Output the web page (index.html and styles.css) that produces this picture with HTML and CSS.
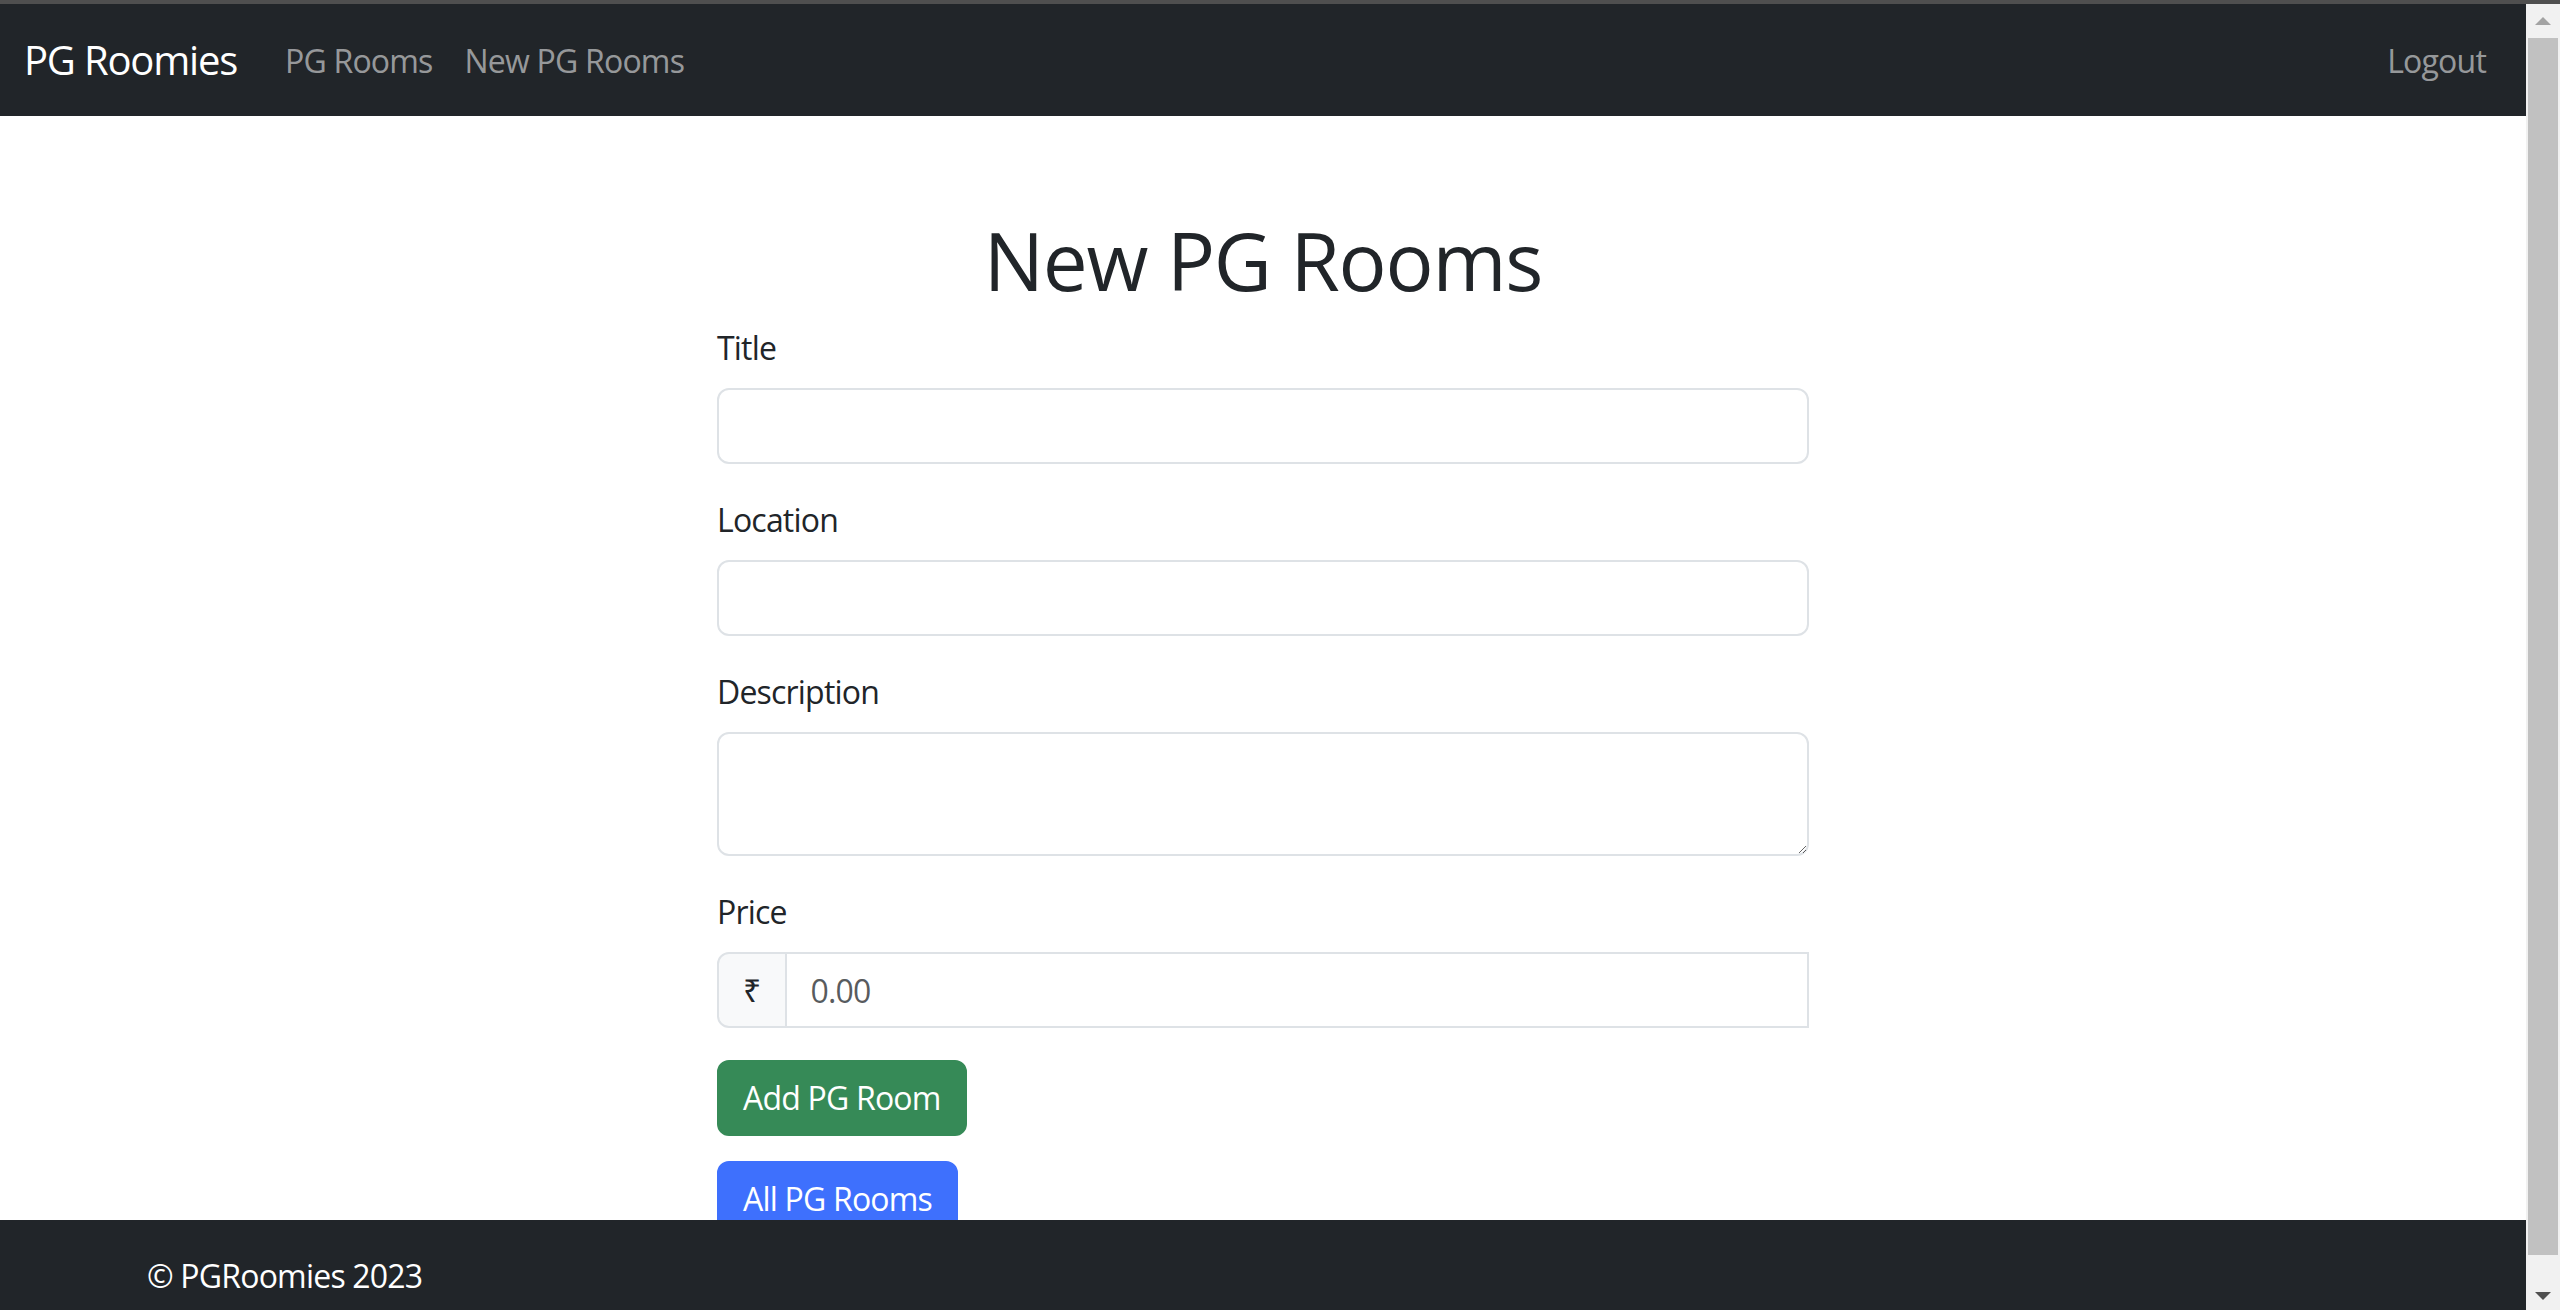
FILE: index.html
```html
<!DOCTYPE html>
<html lang="en">
<head>
<meta charset="utf-8">
<title>New PG Rooms</title>
<link rel="stylesheet" href="styles.css">
</head>
<body>
<div class="window-edge"></div>
<div class="viewport">
  <div class="app">
    <nav class="navbar">
      <a class="brand" href="#">PG Roomies</a>
      <ul class="nav">
        <li><a class="nav-link" href="#">PG Rooms</a></li>
        <li><a class="nav-link" href="#">New PG Rooms</a></li>
      </ul>
      <ul class="nav nav-right">
        <li><a class="nav-link" href="#">Logout</a></li>
      </ul>
    </nav>
    <main class="main">
      <div class="container">
        <div class="col">
          <h1 class="title">New PG Rooms</h1>
          <form class="form">
            <div class="field">
              <label class="form-label" for="title">Title</label>
              <input class="form-control" type="text" id="title">
            </div>
            <div class="field">
              <label class="form-label" for="location">Location</label>
              <input class="form-control" type="text" id="location">
            </div>
            <div class="field">
              <label class="form-label" for="description">Description</label>
              <textarea class="form-control textarea" id="description"></textarea>
            </div>
            <div class="field">
              <label class="form-label" for="price">Price</label>
              <div class="input-group">
                <span class="addon">₹</span>
                <input class="form-control group-input" type="text" id="price" placeholder="0.00">
              </div>
            </div>
            <button class="btn btn-success" type="button">Add PG Room</button>
          </form>
          <div class="back">
            <a class="btn btn-primary" href="#">All PG Rooms</a>
          </div>
        </div>
      </div>
    </main>
    <footer class="footer">
      <div class="container">
        <span>© PGRoomies 2023</span>
      </div>
    </footer>
  </div>
  <div class="scrollbar">
    <div class="sb-button"><span class="arrow-up"></span></div>
    <div class="sb-track"><div class="sb-thumb"></div></div>
    <div class="sb-button"><span class="arrow-down"></span></div>
  </div>
</div>
</body>
</html>
```

FILE: styles.css
```css
* {
  box-sizing: border-box;
}

html,
body {
  margin: 0;
  height: 100%;
  overflow: hidden;
}

body {
  font-family: "Open Sans", "Noto Sans", "DejaVu Sans", sans-serif;
  font-size: 32px;
  line-height: 1.5;
  letter-spacing: -0.025em;
  color: #212529;
  background: #ffffff;
}

.window-edge {
  height: 4px;
  background: #4f4f4f;
}

.viewport {
  display: flex;
  align-items: flex-start;
  height: 1306px;
  overflow: hidden;
}

.app {
  flex: 1;
  display: flex;
  flex-direction: column;
  height: 1328px;
  min-width: 0;
}

/* Navbar */
.navbar {
  display: flex;
  align-items: center;
  height: 112px;
  padding: 16px 24px;
  background: #212529;
  flex-shrink: 0;
}

.brand {
  font-size: 40px;
  line-height: 60px;
  color: #ffffff;
  text-decoration: none;
  margin-right: 32px;
  letter-spacing: -0.03em;
}

.nav {
  display: flex;
  list-style: none;
  margin: 0;
  padding: 0;
}

.nav-right {
  margin-left: auto;
}

.nav-link {
  display: block;
  padding: 17px 16px 15px;
  font-size: 32px;
  line-height: 48px;
  color: rgba(255, 255, 255, 0.55);
  text-decoration: none;
}

/* Main */
.main {
  flex: 1;
  min-height: 0;
  overflow: hidden;
}

.container {
  width: 2280px;
  margin: 0 auto;
  padding: 0 24px;
}

.col {
  width: 1092px;
  margin-left: 570px;
}

.title {
  margin: 96px 0 16px;
  font-size: 80px;
  line-height: 96px;
  font-weight: 400;
  letter-spacing: -0.015em;
  text-align: center;
}

.field {
  margin-bottom: 32px;
}

.form-label {
  display: inline-block;
  margin-bottom: 16px;
}

.form-control {
  display: block;
  width: 100%;
  height: 76px;
  padding: 12px 24px;
  font-family: inherit;
  font-size: 32px;
  line-height: 48px;
  letter-spacing: inherit;
  color: #212529;
  background: #ffffff;
  border: 2px solid #dee2e6;
  border-radius: 12px;
  outline: none;
  margin: 0;
}

.form-control::placeholder {
  color: rgba(33, 37, 41, 0.75);
}

.textarea {
  height: 124px;
  resize: vertical;
}

.input-group {
  display: flex;
  align-items: stretch;
}

.addon {
  display: flex;
  align-items: center;
  padding: 12px 24px;
  font-size: 32px;
  line-height: 48px;
  background: #f8f9fa;
  border: 2px solid #dee2e6;
  border-radius: 12px 0 0 12px;
}

.group-input {
  flex: 1;
  width: auto;
  min-width: 0;
  margin-left: -2px;
  border-radius: 0;
}

.btn {
  display: inline-block;
  padding: 12px 24px;
  font-family: inherit;
  font-size: 32px;
  line-height: 48px;
  letter-spacing: inherit;
  color: #ffffff;
  text-decoration: none;
  border: 2px solid transparent;
  border-radius: 12px;
  cursor: pointer;
}

.btn-success {
  background: #368a57;
  border-color: #368a57;
}

.btn-primary {
  background: #3e70fd;
  border-color: #3e70fd;
}

.back {
  margin-top: 25px;
}

/* Footer */
.footer {
  flex-shrink: 0;
  height: 112px;
  padding: 32px 0;
  background: #212529;
  color: #ffffff;
}

/* Fake scrollbar */
.scrollbar {
  width: 34px;
  height: 1306px;
  flex-shrink: 0;
  display: flex;
  flex-direction: column;
  background: #f1f1f1;
}

.sb-button {
  height: 34px;
  display: flex;
  align-items: center;
  justify-content: center;
  flex-shrink: 0;
}

.sb-track {
  flex: 1;
  padding: 0 2px;
}

.sb-thumb {
  height: 1217px;
  background: #c1c1c1;
}

.arrow-up {
  width: 0;
  height: 0;
  border-left: 8px solid transparent;
  border-right: 8px solid transparent;
  border-bottom: 8px solid #a3a3a3;
}

.arrow-down {
  width: 0;
  height: 0;
  border-left: 8px solid transparent;
  border-right: 8px solid transparent;
  border-top: 8px solid #505050;
  margin-top: 6px;
}
```
